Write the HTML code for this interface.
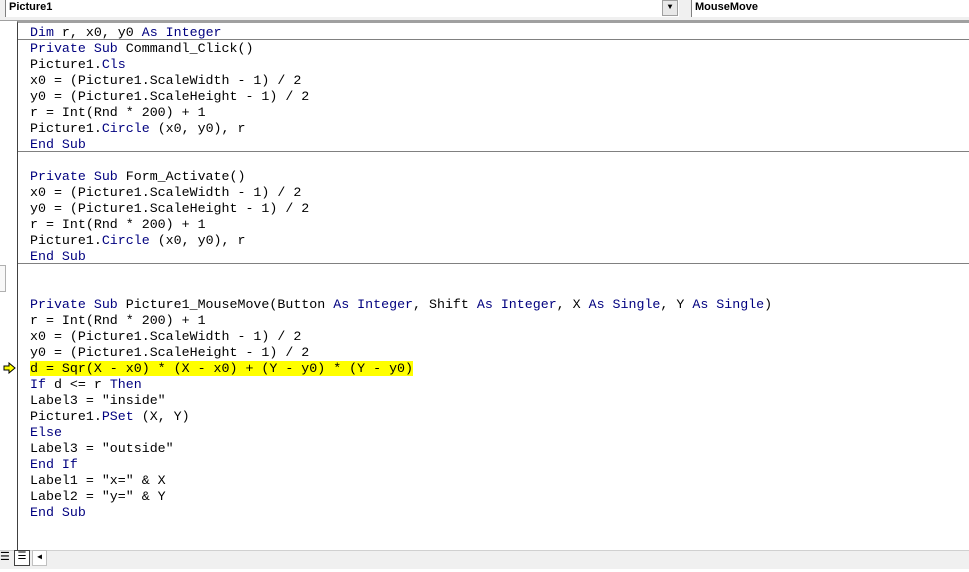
<!DOCTYPE html>
<html><head><style>
body{margin:0;width:969px;height:572px;overflow:hidden;background:#fff;position:relative;font-family:"Liberation Mono",monospace}
#top{position:absolute;left:0;top:0;width:969px;height:20px;background:#f0f0f0;border-bottom:1px solid #a0a0a0}
.combo{position:absolute;top:0;height:17px;background:#fff;border-left:1px solid #808080;font:bold 11px "Liberation Sans",sans-serif;line-height:14px;padding-left:3px;box-sizing:border-box}
.btn{position:absolute;top:0;left:662px;width:16px;height:16px;background:#e8e8e8;border:1px solid #a0a0a0;box-sizing:border-box;font-size:8px;text-align:center;line-height:14px}
#code{position:absolute;left:17px;top:21px;right:0;bottom:22px;background:#fff;border-left:1px solid #404040;border-top:2px solid #a0a0a0}
.l{position:absolute;left:12px;font-size:13.3px;line-height:16px;white-space:pre;color:#000}
.k{color:#00007f}
.sep{position:absolute;left:0;right:0;height:1px;background:#808080}
.hl{background:#ffff00}
</style></head><body>
<div id="top"></div>
<div class="combo" style="left:5px;width:674px">Picture1</div>
<div class="btn">▼</div>
<div class="combo" style="left:691px;width:278px">MouseMove</div>
<div id="code">
<div class="l" style="top:2px"><span class="k">Dim</span> r, x0, y0 <span class="k">As Integer</span>
<span class="k">Private Sub</span> Commandl_Click()
Picture1.<span class="k">Cls</span>
x0 = (Picture1.ScaleWidth - 1) / 2
y0 = (Picture1.ScaleHeight - 1) / 2
r = Int(Rnd * 200) + 1
Picture1.<span class="k">Circle</span> (x0, y0), r
<span class="k">End Sub</span>

<span class="k">Private Sub</span> Form_Activate()
x0 = (Picture1.ScaleWidth - 1) / 2
y0 = (Picture1.ScaleHeight - 1) / 2
r = Int(Rnd * 200) + 1
Picture1.<span class="k">Circle</span> (x0, y0), r
<span class="k">End Sub</span>


<span class="k">Private Sub</span> Picture1_MouseMove(Button <span class="k">As Integer</span>, Shift <span class="k">As Integer</span>, X <span class="k">As Single</span>, Y <span class="k">As Single</span>)
r = Int(Rnd * 200) + 1
x0 = (Picture1.ScaleWidth - 1) / 2
y0 = (Picture1.ScaleHeight - 1) / 2
<span class="hl">d = Sqr(X - x0) * (X - x0) + (Y - y0) * (Y - y0)</span>
<span class="k">If</span> d &lt;= r <span class="k">Then</span>
Label3 = "inside"
Picture1.<span class="k">PSet</span> (X, Y)
<span class="k">Else</span>
Label3 = "outside"
<span class="k">End If</span>
Label1 = "x=" &amp; X
Label2 = "y=" &amp; Y
<span class="k">End Sub</span></div>
<div class="sep" style="top:16px"></div>
<div class="sep" style="top:128px"></div>
<div class="sep" style="top:240px"></div>
</div>
<svg style="position:absolute;left:3px;top:362px" width="14" height="12"><path d="M1 4H6V1L12 6L6 11V8H1Z" fill="#ffff00" stroke="#000" stroke-width="1"/></svg>
<div style="position:absolute;left:0;top:265px;width:5px;height:25px;border:1px solid #b0b0b0;border-left:none;background:#f8f8f8"></div>
<div style="position:absolute;left:0;top:550px;width:969px;height:18px;background:#f0f0f0;border-top:1px solid #d0d0d0"></div>
<div style="position:absolute;left:0;top:551px;font-size:11px;line-height:14px">☰</div>
<div style="position:absolute;left:14px;top:550px;width:16px;height:16px;border:1px solid #404040;box-sizing:border-box;background:#fff;font-size:10px;line-height:14px;text-align:center">☰</div>
<div style="position:absolute;left:32px;top:550px;width:15px;height:16px;border:1px solid #c0c0c0;box-sizing:border-box;background:#fff;font-size:8px;line-height:14px;text-align:center">◀</div>
</body></html>
